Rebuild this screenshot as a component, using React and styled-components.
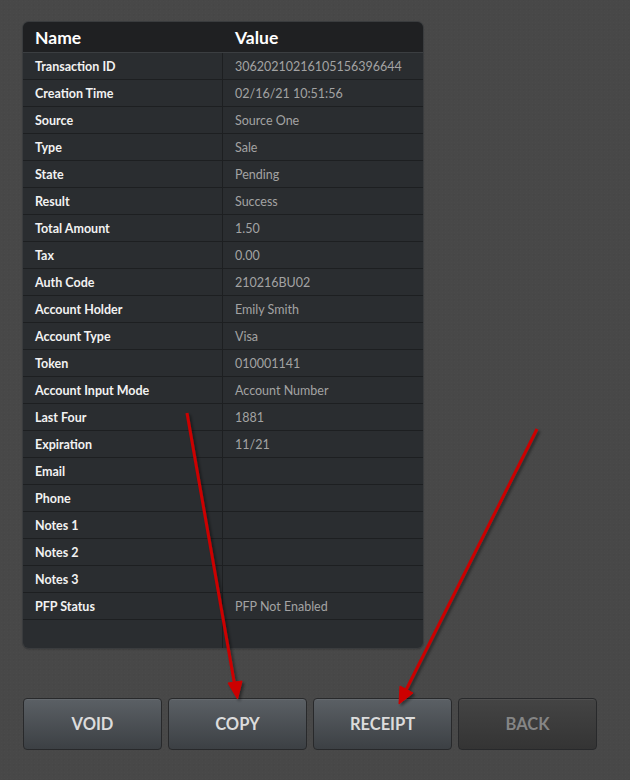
import React from "react"
import styled, { createGlobalStyle } from "styled-components"

const rows = [
  ["Transaction ID", "30620210216105156396644"],
  ["Creation Time", "02/16/21 10:51:56"],
  ["Source", "Source One"],
  ["Type", "Sale"],
  ["State", "Pending"],
  ["Result", "Success"],
  ["Total Amount", "1.50"],
  ["Tax", "0.00"],
  ["Auth Code", "210216BU02"],
  ["Account Holder", "Emily Smith"],
  ["Account Type", "Visa"],
  ["Token", "010001141"],
  ["Account Input Mode", "Account Number"],
  ["Last Four", "1881"],
  ["Expiration", "11/21"],
  ["Email", ""],
  ["Phone", ""],
  ["Notes 1", ""],
  ["Notes 2", ""],
  ["Notes 3", ""],
  ["PFP Status", "PFP Not Enabled"],
  ["", ""],
]

const buttons = [
  { label: "VOID" },
  { label: "COPY" },
  { label: "RECEIPT" },
  { label: "BACK", disabled: true },
]

export default function App() {
  return (
    <>
      <GlobalStyle />
      <Page>
        <Table>
          <HeaderRow>
            <HeaderCell>Name</HeaderCell>
            <HeaderCell>Value</HeaderCell>
          </HeaderRow>
          {rows.map(([name, value], i) => (
            <Row key={i}>
              <NameCell>{name}</NameCell>
              <ValueCell>{value}</ValueCell>
            </Row>
          ))}
        </Table>
        <ButtonBar>
          {buttons.map((b) => (
            <Button key={b.label} $disabled={b.disabled}>
              {b.label}
            </Button>
          ))}
        </ButtonBar>
        <Arrows width="630" height="780" viewBox="0 0 630 780">
          <defs>
            <filter id="sh" x="-20%" y="-20%" width="140%" height="140%">
              <feDropShadow dx="2" dy="2" stdDeviation="1.5" floodColor="#000" floodOpacity="0.45" />
            </filter>
          </defs>
          <g filter="url(#sh)" fill="#cc0000" stroke="#cc0000">
            <line x1="187" y1="413" x2="234.5" y2="684" strokeWidth="3" />
            <polygon points="237.5,699 228,683 242,681" strokeWidth="1" />
            <line x1="537" y1="429" x2="406" y2="690" strokeWidth="3" />
            <polygon points="399,704 400,686 413,693" strokeWidth="1" />
          </g>
        </Arrows>
      </Page>
    </>
  )
}

const GlobalStyle = createGlobalStyle`
  html, body {
    margin: 0;
    padding: 0;
    background: #484848;
  }
  body {
    font-family: Lato, "Liberation Sans", sans-serif;
  }
`

const Page = styled.div`
  position: relative;
  width: 630px;
  height: 780px;
  padding: 22px 0 0 23px;
  box-sizing: border-box;
  background-color: #484848;
  background-image: radial-gradient(rgba(255, 255, 255, 0.012) 1px, transparent 1px),
    radial-gradient(rgba(0, 0, 0, 0.025) 1px, transparent 1px);
  background-size: 3px 3px, 5px 5px;
  background-position: 0 0, 1px 2px;
`

const Table = styled.div`
  width: 400px;
  border-radius: 6px;
  overflow: hidden;
  background: #2a2d30;
  box-shadow: 0 0 0 1px #3a3c3e, 0 1px 2px rgba(0, 0, 0, 0.4);
`

const HeaderRow = styled.div`
  display: grid;
  grid-template-columns: 200px 200px;
  height: 31px;
  background: #1f2022;
  border-bottom: 1px solid #3b3e41;
  box-sizing: border-box;
`

const HeaderCell = styled.div`
  display: flex;
  align-items: center;
  padding-left: 12px;
  color: #ffffff;
  font-size: 17.5px;
  font-weight: 700;
`

const Row = styled.div`
  display: grid;
  grid-template-columns: 200px 200px;
  height: 27px;
  border-bottom: 1px solid #1d1f21;
  box-sizing: border-box;
  &:last-child {
    border-bottom: none;
    height: 28px;
  }
`

const NameCell = styled.div`
  display: flex;
  align-items: center;
  padding-left: 12px;
  color: #f2f2f2;
  font-size: 12.5px;
  font-weight: 700;
  border-right: 1px solid #1d1f21;
`

const ValueCell = styled.div`
  display: flex;
  align-items: center;
  padding-left: 12px;
  color: #a3a3a3;
  font-size: 12.5px;
`

const ButtonBar = styled.div`
  display: flex;
  gap: 6px;
  margin-top: 50px;
`

const Button = styled.div`
  width: 139px;
  height: 52px;
  box-sizing: border-box;
  display: flex;
  align-items: center;
  justify-content: center;
  border-radius: 4px;
  border: 1px solid #28292b;
  font-size: 16.5px;
  font-weight: 700;
  color: ${(p) => (p.$disabled ? "#858585" : "#dcdcdc")};
  background: ${(p) =>
    p.$disabled
      ? "linear-gradient(#444444, #343434)"
      : "linear-gradient(#5b6065, #3c4044)"};
  box-shadow: inset 0 1px 0 rgba(255, 255, 255, 0.06);
`

const Arrows = styled.svg`
  position: absolute;
  left: 0;
  top: 0;
  pointer-events: none;
`
